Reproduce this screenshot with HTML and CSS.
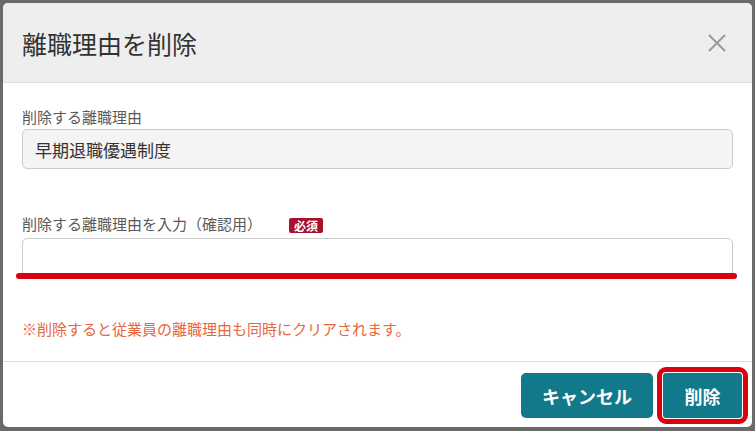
FILE: index.html
```html
<!doctype html>
<html lang="ja">
	<head>
		<meta charset="UTF-8" />
		<meta name="viewport" content="width=device-width, initial-scale=1.0" />
		<title>離職理由を削除</title>
		<link rel="stylesheet" href="styles.css">
	</head>

	<body>
		<div class="modal">
			<header class="modalHeader">
				<h1 class="modalTitle">離職理由を削除</h1>
				<button class="closeButton" aria-label="閉じる">
					<svg width="18" height="18" viewBox="0 0 18 18">
						<path d="M1 1 L17 17 M17 1 L1 17" stroke="#9a9a9a" stroke-width="2" fill="none" />
					</svg>
				</button>
			</header>
			<main class="modalBody">
				<div class="field">
					<label class="fieldLabel" for="currentReason">削除する離職理由</label>
					<input id="currentReason" class="textInput readonly" value="早期退職優遇制度" readonly />
				</div>
				<div class="field confirm">
					<label class="fieldLabel" for="confirmReason">
						削除する離職理由を入力（確認用）
						<span class="requiredBadge">必須</span>
					</label>
					<div class="inputWrap">
						<input id="confirmReason" class="textInput" autocomplete="off" />
					</div>
				</div>
				<p class="notice">※削除すると従業員の離職理由も同時にクリアされます。</p>
			</main>
			<footer class="modalFooter">
				<button class="actionButton">キャンセル</button>
				<button class="actionButton highlighted">削除</button>
			</footer>
		</div>
	</body>
</html>
```

FILE: styles.css
```css
*,
*::before,
*::after {
	box-sizing: border-box;
	margin: 0;
	padding: 0;
}

body {
	background-color: #6a6a6a;
	width: 755px;
	height: 431px;
	overflow: hidden;
	padding: 3px 3px 4px 3px;
	font-family: 'Noto Sans CJK JP', 'Liberation Sans', sans-serif;
	color: #333;
}

.modal {
	width: 749px;
	height: 424px;
	background: #fff;
	border-radius: 5px;
	overflow: hidden;
	display: flex;
	flex-direction: column;
}

.modalHeader {
	height: 80px;
	flex: none;
	background: #eeeeee;
	border-bottom: 1px solid #dcdcdc;
	padding: 0 26px 0 19px;
	display: flex;
	align-items: center;
	justify-content: space-between;
}

.modalTitle {
	font-size: 25px;
	font-weight: 400;
	line-height: 32px;
	color: #333;
}

.closeButton {
	border: none;
	background: none;
	display: flex;
	cursor: pointer;
}

.modalBody {
	padding: 24px 19px 22px 19px;
	border-bottom: 1px solid #dcdcdc;
}

.field {
	display: flex;
	flex-direction: column;
	gap: 2px;
}

.field.confirm {
	margin-top: 45px;
	gap: 4px;
}

.fieldLabel {
	font-size: 15px;
	line-height: 20px;
	color: #5a5a5a;
	display: flex;
	align-items: center;
	gap: 27px;
}

.requiredBadge {
	display: inline-block;
	background: #a8102c;
	color: #fff;
	font-size: 12px;
	font-weight: 700;
	line-height: 15px;
	padding: 0 5px;
	border-radius: 2px;
	margin-top: 2px;
}

.textInput {
	width: 711px;
	height: 40px;
	border: 1px solid #cccccc;
	border-radius: 5px;
	padding: 0 12px;
	font-family: inherit;
	font-size: 17px;
	color: #333;
	background: #fff;
	outline: none;
}

.textInput.readonly {
	background: #f4f4f4;
}

.inputWrap {
	position: relative;
}

/* annotation underline over the input */
.inputWrap::after {
	content: '';
	position: absolute;
	left: -6px;
	width: 721px;
	top: 35px;
	height: 6px;
	border-radius: 3px;
	background: #d9000f;
}

.notice {
	margin-top: 41px;
	font-size: 15px;
	line-height: 20px;
	color: #e8663d;
}

.modalFooter {
	flex: 1;
	display: flex;
	justify-content: flex-end;
	align-items: flex-start;
	gap: 10px;
	padding: 11px 10px 0 0;
}

.actionButton {
	height: 45px;
	padding: 0 21px;
	border: none;
	border-radius: 5px;
	background: #12798b;
	color: #fff;
	font-family: inherit;
	font-size: 18px;
	font-weight: 700;
	cursor: pointer;
}

.actionButton.highlighted {
	width: 79px;
	border-radius: 3px;
	outline: 5px solid #dd0010;
	outline-offset: 1px;
}
```
